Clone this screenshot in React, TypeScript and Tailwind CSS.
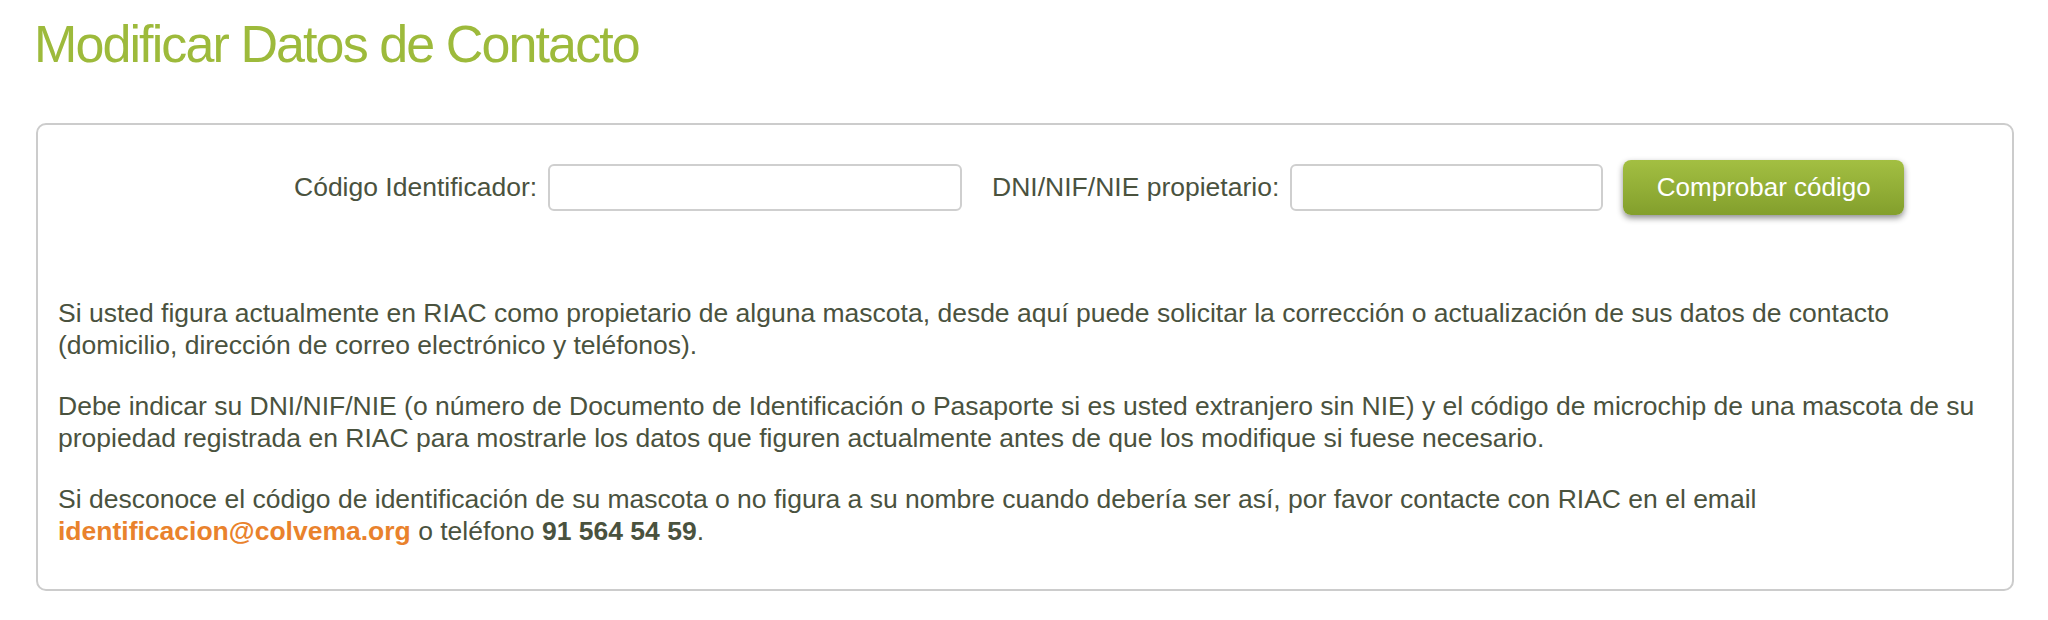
import React from "react";

const FONT = { fontFamily: '"Liberation Sans", Arial, Helvetica, sans-serif' };

function Field({ label, width }: { label: string; width: string }) {
  return (
    <label className="flex items-center gap-[11px]">
      <span className="whitespace-nowrap">{label}</span>
      <input
        type="text"
        className={`${width} h-[47px] rounded-[6px] border-2 border-[#cfcfcf] bg-white px-2 text-[24px] outline-none`}
      />
    </label>
  );
}

export default function App() {
  return (
    <div className="min-h-[620px] bg-white text-[#4a523e]" style={FONT}>
      {/* Page title */}
      <h1 className="ml-[34px] pt-[14px] text-[52px] leading-[60px] tracking-[-1.9px] text-[#9dba3b]">
        Modificar Datos de Contacto
      </h1>

      <div className="ml-[36px] mr-[34px] mt-[49px] rounded-[10px] border-2 border-[#cccccc] px-[20px] pb-[42px] pt-[35px]">
        {/* Lookup form */}
        <form
          className="flex items-center pl-[236px] text-[26.5px]"
          onSubmit={(e) => e.preventDefault()}
        >
          <Field label="Código Identificador:" width="w-[414px]" />
          <div className="ml-[30px]">
            <Field label="DNI/NIF/NIE propietario:" width="w-[313px]" />
          </div>
          <button
            type="submit"
            className="ml-[20px] h-[55px] w-[281px] rounded-[8px] bg-gradient-to-b from-[#a3bf42] to-[#839f2c] text-[26px] text-white shadow-[0_3px_6px_rgba(0,0,0,0.45)]"
          >
            Comprobar código
          </button>
        </form>

        {/* Help text */}
        <div className="mt-[82px] space-y-[29px] whitespace-nowrap text-[26.5px] leading-[32px]">
          <p>
            Si usted figura actualmente en RIAC como propietario de alguna mascota, desde aquí puede
            solicitar la corrección o actualización de sus datos de contacto
            <br />
            (domicilio, dirección de correo electrónico y teléfonos).
          </p>
          <p>
            Debe indicar su DNI/NIF/NIE (o número de Documento de Identificación o Pasaporte si es
            usted extranjero sin NIE) y el código de microchip de una mascota de su
            <br />
            propiedad registrada en RIAC para mostrarle los datos que figuren actualmente antes de que
            los modifique si fuese necesario.
          </p>
          <p>
            Si desconoce el código de identificación de su mascota o no figura a su nombre cuando
            debería ser así, por favor contacte con RIAC en el email
            <br />
            <a href="mailto:identificacion@colvema.org" className="font-bold text-[#e9822c]">
              identificacion@colvema.org
            </a>{" "}
            o teléfono <b>91 564 54 59</b>.
          </p>
        </div>
      </div>
    </div>
  );
}
